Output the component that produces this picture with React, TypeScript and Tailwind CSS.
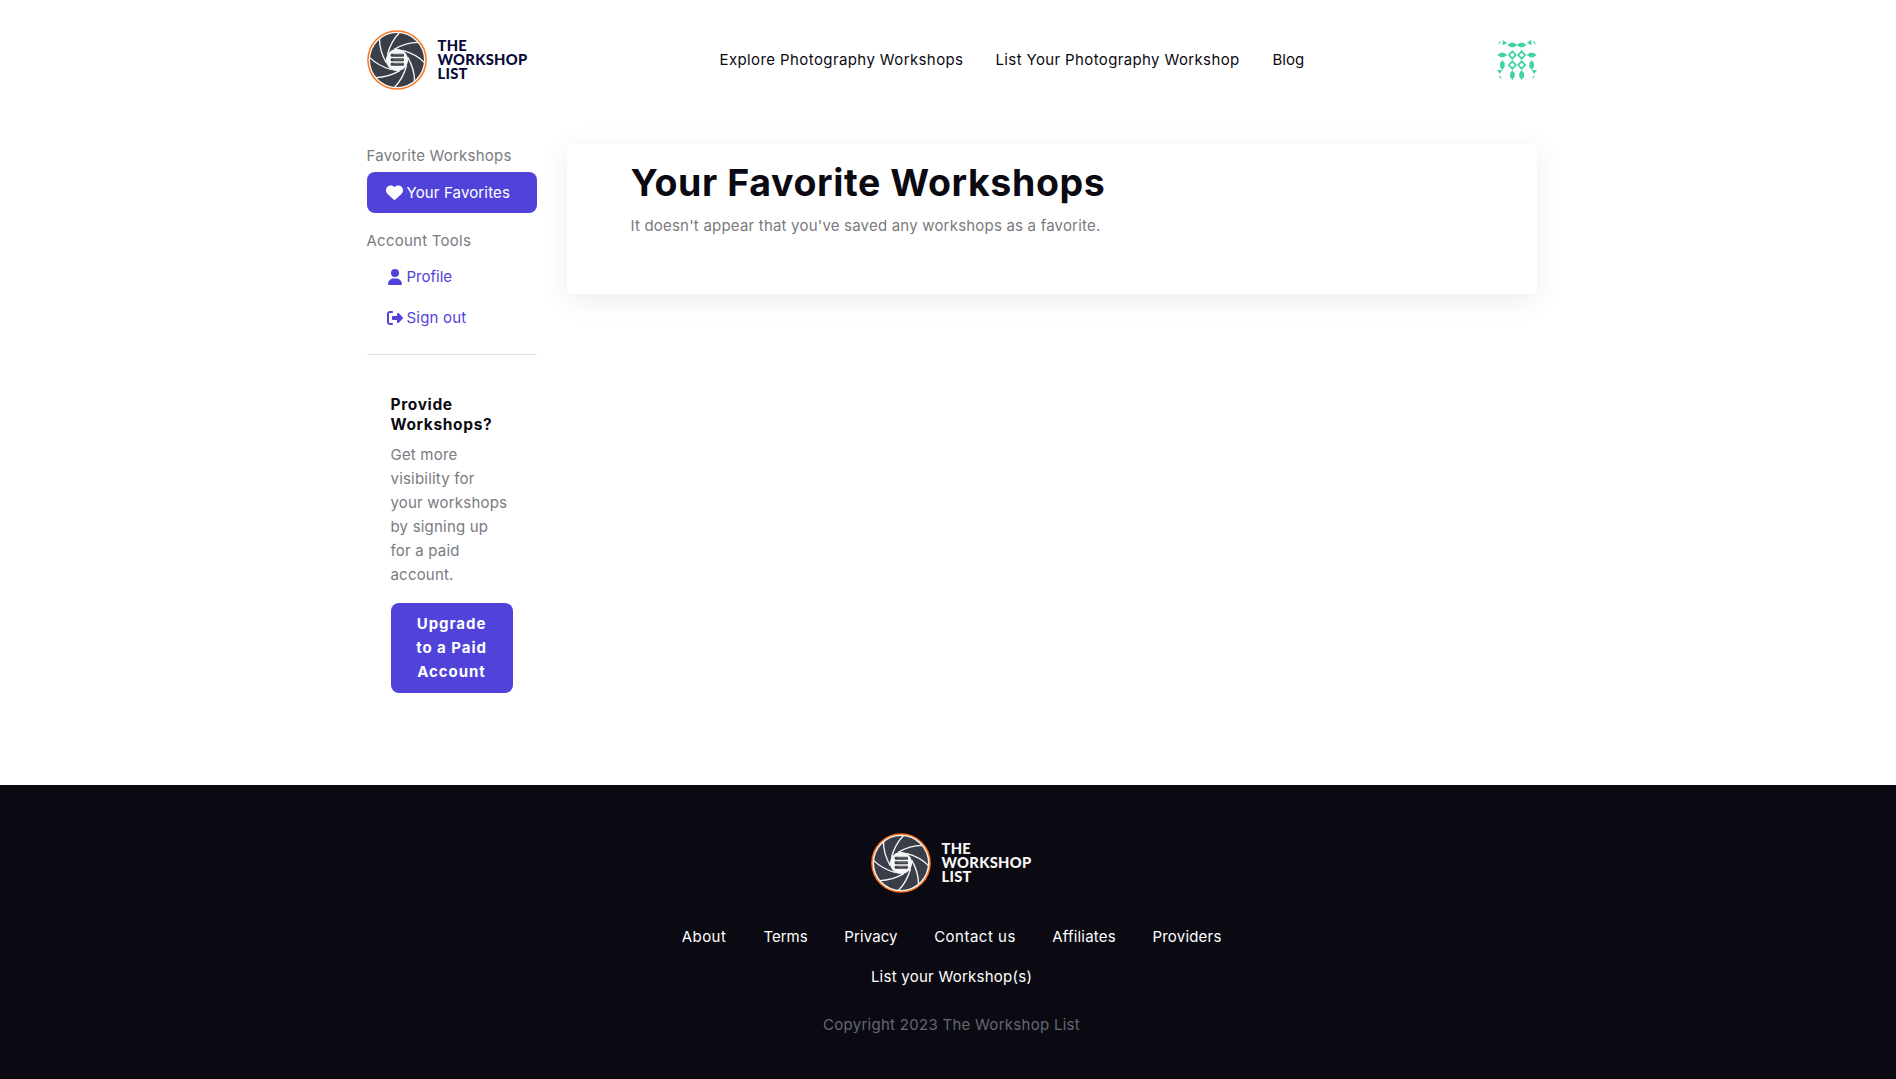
import { FaHeart, FaRightFromBracket, FaUser } from 'react-icons/fa6';

const BLADES = [5, 50, 95, 140, 185, 230, 275, 320];

function Aperture() {
  return (
    <svg viewBox="0 0 180 180" className="size-[60px] shrink-0">
      <circle cx="90" cy="90" r="89.5" fill="#fb7420" />
      <circle cx="90" cy="90" r="85" fill="#f7f7f7" />
      <circle cx="90" cy="90" r="81" fill="#3a3e48" />
      <g fill="none" stroke="#f7f7f7" strokeWidth="4">
        {BLADES.map((a) => (
          <path key={a} d="M172 90 Q144 67 104 60" transform={`rotate(${a} 90 90)`} />
        ))}
      </g>
      <circle cx="90" cy="90" r="33" fill="#f7f7f7" />
      <g fill="#3a3e48">
        <rect x="71" y="71" width="40" height="9" rx="3" />
        <rect x="71" y="85" width="40" height="9" rx="3" />
        <rect x="71" y="98" width="40" height="9" rx="3" />
      </g>
      <g stroke="#a9abb0" strokeWidth="1.5">
        <path d="M79 74H109M79 88H109M79 101H109" />
      </g>
    </svg>
  );
}

function Logo({ tone }: { tone: string }) {
  return (
    <a className={`flex w-[162px] items-center gap-[11px] ${tone}`}>
      <Aperture />
      <span className="font-[Lato] text-[14.7px] font-black leading-[13.7px] tracking-[0.3px]">
        THE
        <br />
        WORKSHOP
        <br />
        LIST
      </span>
    </a>
  );
}

function Avatar() {
  const rings = [[46, 45], [74, 45], [46, 75], [74, 75]];
  return (
    <svg viewBox="0 0 120 120" className="size-10" fill="#41d3a2">
      {rings.map(([x, y]) => (
        <path key={`${x}-${y}`} fillRule="evenodd" d={`M${x} ${y - 15}l14 15l-14 15l-14 -15zM${x} ${y - 7}l-7 7l7 7l7 -7z`} />
      ))}
      {[[46, 15], [74, 15], [16, 45], [104, 45]].map(([x, y]) => (
        <path key={`h${x}-${y}`} d={`M${x - 15} ${y}l10 -7h10l10 7l-10 7h-10z`} />
      ))}
      {[[16, 75], [104, 75], [46, 105], [74, 105]].map(([x, y]) => (
        <path key={`v${x}-${y}`} d={`M${x} ${y - 15}l7 10v10l-7 10l-7 -10v-10z`} />
      ))}
      <path d="M17 0L31 9L17 16zM4 15L6 6L13 2zM90 8L103 -1V16zM107 2L115 6V15zM0 90H16L8 102zM4 106L14 112L11 116zM104 90H120L112 102zM114 106L106 112L109 116z" />
    </svg>
  );
}

export default function App() {
  return (
    <div className="flex h-[1079px] flex-col overflow-hidden bg-white font-[Inter,sans-serif] text-[15px] leading-6 text-[#7a7a80]">
      <div className="flex-1 pl-[7px]">
        <div className="mx-auto w-[1170px]">
          <header className="flex h-[120px] items-center text-[#0b0a12]">
            <Logo tone="text-[#09093a]" />
            <nav className="ml-[191px] flex gap-8 whitespace-nowrap">
              <a className="w-[244px] tracking-[0.4px]">Explore Photography Workshops</a>
              <a className="w-[245px] tracking-[0.37px]">List Your Photography Workshop</a>
              <a>Blog</a>
            </nav>
            <div className="ml-auto">
              <Avatar />
            </div>
          </header>

          <div className="flex items-start gap-[30px] pt-6">
            <aside className="w-[170px] shrink-0">
              <div className="tracking-[0.22px]">Favorite Workshops</div>
              <a className="mt-1 flex h-[41px] items-center gap-1 rounded-lg bg-[#5143d9] pl-[19px] tracking-[0.14px] text-white">
                <FaHeart className="size-[17px]" />
                Your Favorites
              </a>
              <div className="mt-4 tracking-[0.25px]">Account Tools</div>
              <div className="mt-[3px] text-[#5143d9]">
                <a className="flex h-[41px] items-center gap-1 pl-5">
                  <FaUser className="size-4" />
                  Profile
                </a>
                <a className="flex h-[41px] items-center gap-1 pl-5 tracking-[0.2px]">
                  <FaRightFromBracket className="size-4" />
                  Sign out
                </a>
              </div>
              <hr className="mt-4 border-[#dedee0]" />
              <div className="px-6 pt-10">
                <h5 className="text-[15.5px] font-bold leading-5 tracking-[0.65px] text-[#0b0a12]">
                  Provide
                  <br />
                  Workshops?
                </h5>
                <p className="mt-2 whitespace-nowrap tracking-[0.2px]">
                  Get more
                  <br />
                  visibility for
                  <br />
                  your workshops
                  <br />
                  by signing up
                  <br />
                  for a paid
                  <br />
                  account.
                </p>
                <a className="mt-4 block rounded-lg bg-[#5143d9] py-[9px] text-center font-bold tracking-[0.95px] text-white">
                  Upgrade
                  <br />
                  to a Paid
                  <br />
                  Account
                </a>
              </div>
            </aside>

            <main className="h-[150px] w-[970px] rounded bg-white px-16 pt-4 shadow-[0_6px_30px_rgba(0,0,0,0.08)]">
              <h1 className="whitespace-nowrap text-[37.5px] font-bold leading-[46px] tracking-[0.6px] text-[#0b0a12]">
                Your Favorite Workshops
              </h1>
              <p className="mt-2 tracking-[0.2px]">
                It doesn't appear that you've saved any workshops as a favorite.
              </p>
            </main>
          </div>
        </div>
      </div>

      <footer className="flex h-[294px] shrink-0 flex-col items-center bg-[#0b0a12] pl-[7px] pt-12">
        <Logo tone="text-[#f7f7f7]" />
        <nav className="mt-8 flex w-[580px] flex-wrap justify-center gap-x-9 gap-y-4 whitespace-nowrap text-center text-white">
          <a className="w-[46px] tracking-[0.45px]">About</a>
          <a className="w-[45px]">Terms</a>
          <a className="w-[54px] tracking-[0.1px]">Privacy</a>
          <a className="w-[82px] tracking-[0.5px]">Contact us</a>
          <a className="w-[64px] tracking-[0.2px]">Affiliates</a>
          <a className="w-[70px] tracking-[0.2px]">Providers</a>
          <a className="tracking-[0.25px]">List your Workshop(s)</a>
        </nav>
        <p className="mt-6 tracking-[0.28px] text-[#636871]">Copyright 2023 The Workshop List</p>
      </footer>
    </div>
  );
}
